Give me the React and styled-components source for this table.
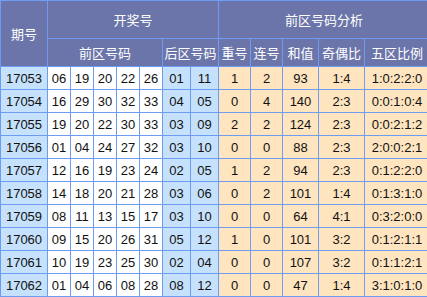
import React from "react";
import styled, { createGlobalStyle } from "styled-components";

const Global = createGlobalStyle`
  html, body { margin: 0; padding: 0; background: #ffffff; }
  body { font-family: "Liberation Sans", Arial, "Noto Sans CJK SC", sans-serif; }
`;

const Wrap = styled.div`
  width: 427px;
  height: 297px;
  overflow: hidden;
  background: #ffffff;
`;

const Grid = styled.div`
  display: grid;
  width: max-content;
  grid-template-columns: 46px repeat(5, 22px) 27px 27px 31px 31px 35px 45px 64px;
  grid-template-rows: 37px 27px repeat(10, 22px);
  gap: 1px;
  padding: 1px;
  background: #6d9cf0;
`;

const Cell = styled.div`
  display: flex;
  align-items: center;
  justify-content: center;
  font-size: 13px;
  color: #111111;
  white-space: nowrap;
  overflow: hidden;
`;

const HeadCell = styled(Cell)`
  background: #6b75a9;
  color: #ffffff;
  font-family: "Noto Sans CJK SC", "Liberation Sans", sans-serif;
  font-size: 13px;
  grid-column: ${(p) => p.$col || "auto"};
  grid-row: ${(p) => p.$row || "auto"};
`;

const IssueCell = styled(Cell)`
  background: #c6e1fb;
`;

const FrontCell = styled(Cell)`
  background: #ffffff;
`;

const BackCell = styled(Cell)`
  background: #c6e1fb;
`;

const StatCell = styled(Cell)`
  background: #fee4bf;
`;

const rows = [
  ["17053", ["06", "19", "20", "22", "26"], ["01", "11"], ["1", "2", "93", "1:4", "1:0:2:2:0"]],
  ["17054", ["16", "29", "30", "32", "33"], ["04", "05"], ["0", "4", "140", "2:3", "0:0:1:0:4"]],
  ["17055", ["19", "20", "22", "30", "33"], ["03", "09"], ["2", "2", "124", "2:3", "0:0:2:1:2"]],
  ["17056", ["01", "04", "24", "27", "32"], ["03", "10"], ["0", "0", "88", "2:3", "2:0:0:2:1"]],
  ["17057", ["12", "16", "19", "23", "24"], ["02", "05"], ["1", "2", "94", "2:3", "0:1:2:2:0"]],
  ["17058", ["14", "18", "20", "21", "28"], ["03", "06"], ["0", "2", "101", "1:4", "0:1:3:1:0"]],
  ["17059", ["08", "11", "13", "15", "17"], ["03", "10"], ["0", "0", "64", "4:1", "0:3:2:0:0"]],
  ["17060", ["09", "15", "20", "26", "31"], ["05", "12"], ["1", "0", "101", "3:2", "0:1:2:1:1"]],
  ["17061", ["10", "19", "23", "25", "30"], ["02", "04"], ["0", "0", "107", "3:2", "0:1:1:2:1"]],
  ["17062", ["01", "04", "06", "08", "28"], ["08", "12"], ["0", "0", "47", "1:4", "3:1:0:1:0"]],
];

export default function App() {
  return (
    <Wrap>
      <Global />
      <Grid>
        <HeadCell $col="1" $row="1 / span 2">期号</HeadCell>
        <HeadCell $col="2 / span 7" $row="1">开奖号</HeadCell>
        <HeadCell $col="9 / span 5" $row="1">前区号码分析</HeadCell>
        <HeadCell $col="2 / span 5" $row="2">前区号码</HeadCell>
        <HeadCell $col="7 / span 2" $row="2">后区号码</HeadCell>
        <HeadCell $row="2">重号</HeadCell>
        <HeadCell $row="2">连号</HeadCell>
        <HeadCell $row="2">和值</HeadCell>
        <HeadCell $row="2">奇偶比</HeadCell>
        <HeadCell $row="2">五区比例</HeadCell>
        {rows.map(([issue, front, back, stats]) => (
          <React.Fragment key={issue}>
            <IssueCell>{issue}</IssueCell>
            {front.map((n, i) => (
              <FrontCell key={"f" + i}>{n}</FrontCell>
            ))}
            {back.map((n, i) => (
              <BackCell key={"b" + i}>{n}</BackCell>
            ))}
            {stats.map((s, i) => (
              <StatCell key={"s" + i}>{s}</StatCell>
            ))}
          </React.Fragment>
        ))}
      </Grid>
    </Wrap>
  );
}
